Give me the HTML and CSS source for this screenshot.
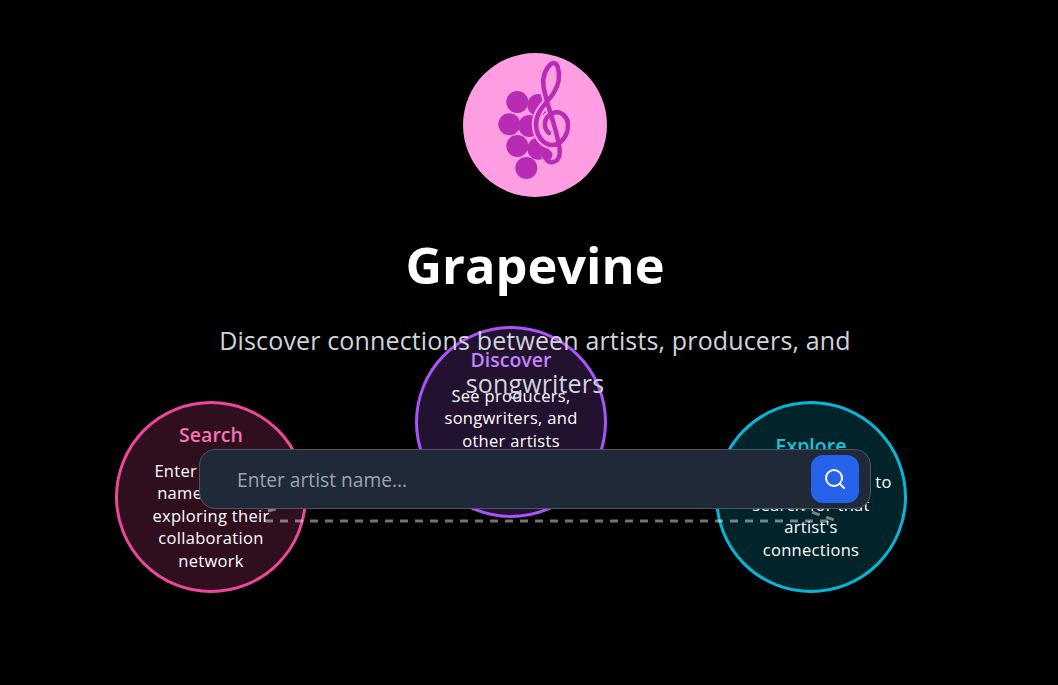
FILE: index.html
```html
<!DOCTYPE html>
<html lang="en">
<head>
<meta charset="utf-8">
<title>Grapevine</title>
<link rel="stylesheet" href="styles.css">
</head>
<body>
<section class="journey">
  <article class="step step-search">
    <h2>Search</h2>
    <p>Enter an artist<br>name to start<br>exploring their<br>collaboration<br>network</p>
  </article>
  <article class="step step-discover">
    <h2>Discover</h2>
    <p>See producers,<br>songwriters, and<br>other artists<br>they've worked<br>with</p>
  </article>
  <article class="step step-explore">
    <h2>Explore</h2>
    <p>Click on any node to<br>search for that<br>artist's<br>connections</p>
  </article>
</section>
<svg class="links" width="1058" height="685" viewBox="0 0 1058 685" aria-hidden="true">
  <path d="M265 521H835"/>
  <path d="M268 511L292 504"/>
  <path d="M798 507L834 520"/>
</svg>
<main class="hero">
  <div class="logo">
    <svg width="144" height="144" viewBox="0 0 144 144" aria-hidden="true">
      <g class="grapes">
        <circle cx="54.300" cy="49" r="11"/>
        <circle cx="75.300" cy="52" r="11"/>
        <circle cx="46.300" cy="71.300" r="11"/>
        <circle cx="66.300" cy="73" r="11"/>
        <circle cx="54.300" cy="93" r="11"/>
        <circle cx="75.300" cy="95.700" r="11"/>
        <circle cx="63.300" cy="115" r="11"/>
      </g>
      <path class="clef-halo" d="M86 80C80 75 80 64 90 60C99 57 105 65 105 72C105 84 97 92 89 92C80 92 73 82 73 71C73 58 84 50 90 41C96 32 97 22 95 15C94 10 90 9 88 11C83 15 79 24 80.500 33C82 47 92 70 96 92C98 102 96 108 90 109C85 110 82 106 83 102"/>
      <path class="clef" d="M86 80C80 75 80 64 90 60C99 57 105 65 105 72C105 84 97 92 89 92C80 92 73 82 73 71C73 58 84 50 90 41C96 32 97 22 95 15C94 10 90 9 88 11C83 15 79 24 80.500 33C82 47 92 70 96 92C98 102 96 108 90 109C85 110 82 106 83 102"/>
      <circle class="clef-end" cx="84" cy="102" r="5.500"/>
    </svg>
  </div>
  <h1>Grapevine</h1>
  <p class="tagline">Discover connections between artists, producers, and songwriters</p>
  <form class="search">
    <input type="text" placeholder="Enter artist name...">
    <button type="button" aria-label="Search">
      <svg width="24" height="24" viewBox="0 0 24 24" aria-hidden="true">
        <circle cx="11" cy="11" r="8"/>
        <path d="M21 21L16.650 16.650"/>
      </svg>
    </button>
  </form>
</main>
</body>
</html>
```
FILE: styles.css
```css
* {
  box-sizing: border-box;
}

html,
body {
  height: 100%;
}

body {
  margin: 0;
  background: #000;
  color: #fff;
  font-family: "Open Sans", "Noto Sans", sans-serif;
  overflow: hidden;
}

.hero {
  position: relative;
  z-index: 2;
  width: 1070px;
  padding-top: 53px;
  display: flex;
  flex-direction: column;
  align-items: center;
}

.logo {
  width: 144px;
  height: 144px;
  border-radius: 50%;
  background: #ff9de2;
  flex: none;
}

.logo svg {
  display: block;
}

.grapes,
.clef-end {
  fill: #b82bb4;
}

.clef,
.clef-halo {
  fill: none;
  stroke-linecap: round;
}

.clef {
  stroke: #b82bb4;
  stroke-width: 4.500;
}

.clef-halo {
  stroke: #ff9de2;
  stroke-width: 8.500;
}

h1 {
  margin: 32px 0 0;
  font-size: 50.500px;
  line-height: 72px;
  font-weight: 700;
}

.tagline {
  width: 672px;
  margin: 18px 0 0;
  font-size: 25px;
  line-height: 43px;
  letter-spacing: 0.150px;
  color: #d1d5db;
  text-align: center;
}

.search {
  width: 672px;
  height: 60px;
  margin-top: 44px;
  padding: 5px 11px 5px 37px;
  display: flex;
  align-items: center;
  background: #1f2937;
  border: 1px solid #4b5563;
  border-radius: 16px;
}

.search input {
  flex: 1;
  min-width: 0;
  height: 100%;
  padding: 0;
  border: 0;
  outline: 0;
  background: transparent;
  color: #fff;
  font: 19.200px "Open Sans", "Noto Sans", sans-serif;
}

.search input::placeholder {
  color: #9ca3af;
  opacity: 1;
}

.search button {
  width: 48px;
  height: 48px;
  padding: 0;
  display: flex;
  align-items: center;
  justify-content: center;
  flex: none;
  border: 0;
  border-radius: 12px;
  background: #2563eb;
}

.search svg {
  fill: none;
  stroke: #fff;
  stroke-width: 2;
  stroke-linecap: round;
}

.journey {
  position: absolute;
  top: 326px;
  left: 115px;
  display: grid;
  grid-template-columns: repeat(3, 192px);
  column-gap: 108px;
  height: 267px;
}

.step {
  width: 192px;
  height: 192px;
  display: flex;
  flex-direction: column;
  justify-content: center;
  border: 3px solid;
  border-radius: 50%;
  text-align: center;
}

.step-search,
.step-explore {
  align-self: end;
}

.step-search {
  background: #2f0e1e;
  border-color: #ec4899;
  color: #f472b6;
}

.step-discover {
  background: #22112f;
  border-color: #a855f7;
  color: #c084fc;
}

.step-explore {
  background: #01242a;
  border-color: #06b6d4;
  color: #14c4dc;
}

.step h2 {
  margin: 0;
  font-size: 19.500px;
  line-height: 26px;
  font-weight: 600;
}

.step p {
  margin: 12px -10px 0;
  font-size: 16.500px;
  line-height: 22.500px;
  letter-spacing: 0.300px;
  color: #fff;
}

.links {
  position: absolute;
  top: 0;
  left: 0;
  z-index: 1;
  fill: none;
  stroke: rgba(255, 255, 255, 0.45);
  stroke-width: 3;
  stroke-dasharray: 8 7;
}
```
